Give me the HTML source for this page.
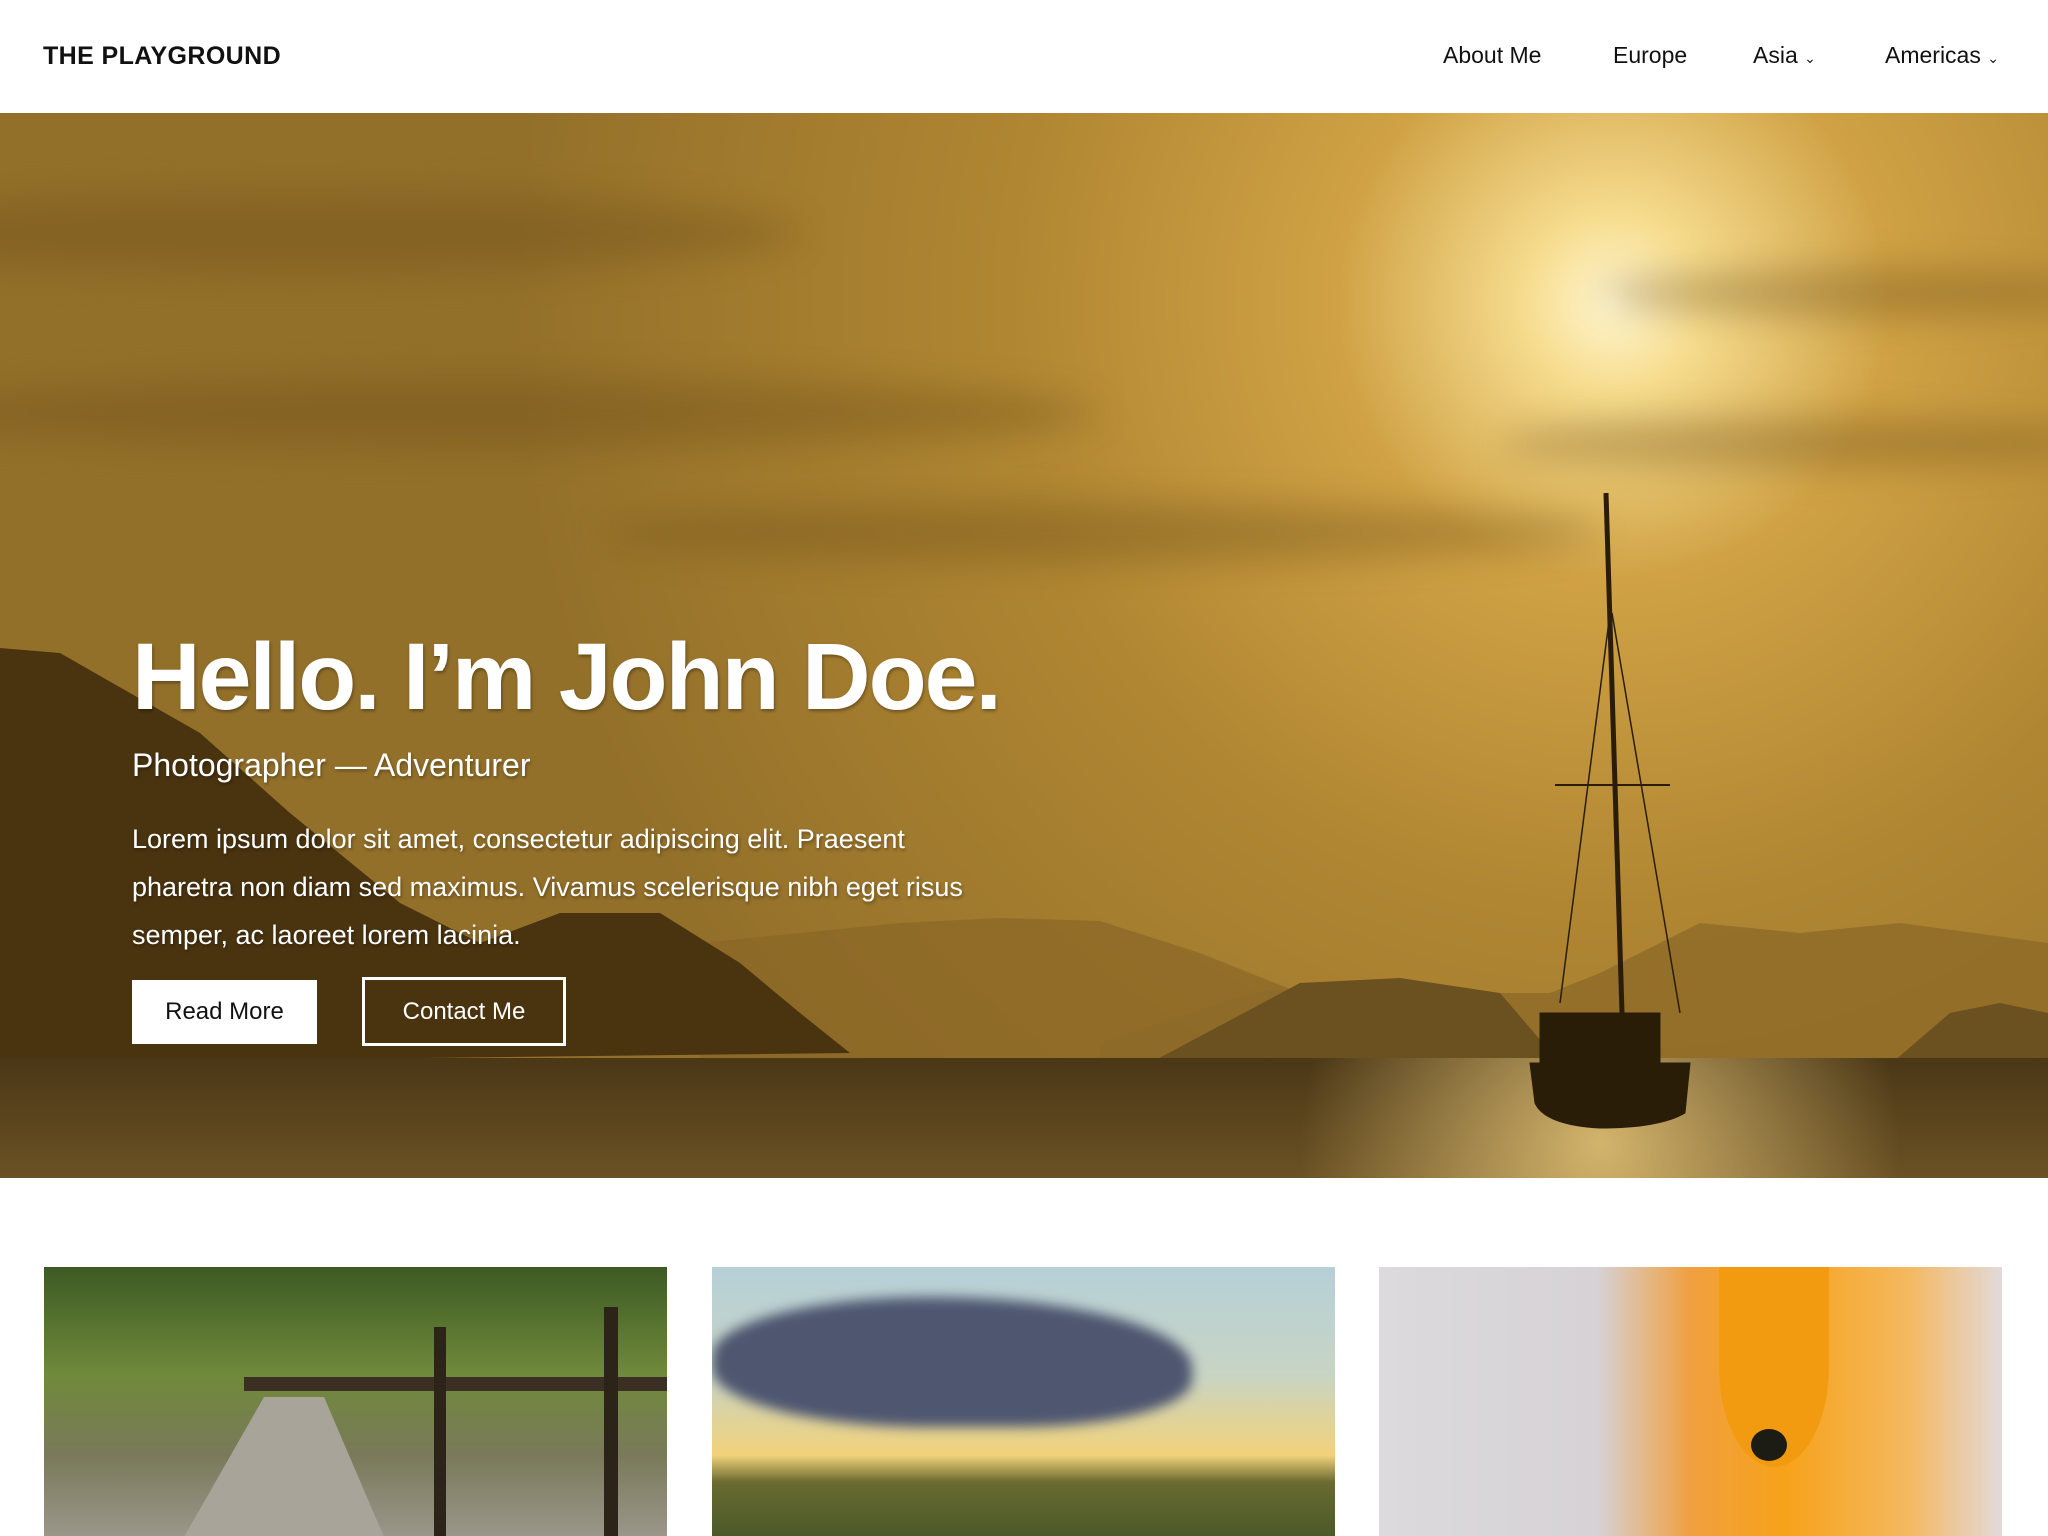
<!DOCTYPE html>
<html><head><meta charset="utf-8"><style>
*{margin:0;padding:0;box-sizing:border-box}
body{width:2048px;height:1536px;overflow:hidden;background:#fff;font-family:"Liberation Sans",sans-serif;position:relative}
.hdr{position:absolute;left:0;top:0;width:2048px;height:113px;background:#fff}
.logo{position:absolute;left:43px;top:42px;font-size:25px;font-weight:bold;letter-spacing:0.4px;color:#111}
.nav{position:absolute;top:42px;font-size:23px;color:#111}
.hero{position:absolute;left:0;top:113px;width:2048px;height:1065px;overflow:hidden}
.t{position:absolute;color:#fff;text-shadow:1px 2px 3px rgba(0,0,0,.35)}
.btn{position:absolute;font-size:24px;display:flex;align-items:center;justify-content:center}
.card{position:absolute;top:1267px;height:269px;width:623px;overflow:hidden}
</style></head><body>
<div class="hdr">
<div class="logo">THE PLAYGROUND</div>
<div class="nav" style="left:1443px">About Me</div>
<div class="nav" style="left:1613px">Europe</div>
<div class="nav" style="left:1753px">Asia <span style="font-size:14px">&#8964;</span></div>
<div class="nav" style="left:1885px">Americas <span style="font-size:14px">&#8964;</span></div>
</div>
<div class="hero">
<svg width="2048" height="1065" viewBox="0 0 2048 1065" style="position:absolute;left:0;top:0">
<defs>
<radialGradient id="sun" cx="1613" cy="190" r="1100" gradientUnits="userSpaceOnUse">
<stop offset="0" stop-color="#fff6d0"/><stop offset="0.08" stop-color="#f6dc8e"/><stop offset="0.25" stop-color="#d0a245"/><stop offset="0.55" stop-color="#b08632"/><stop offset="1" stop-color="#93702a"/></radialGradient>
<linearGradient id="w" x1="0" y1="0" x2="0" y2="1"><stop offset="0" stop-color="#4a3716"/><stop offset="1" stop-color="#6b5224"/></linearGradient>
<radialGradient id="gl" cx="1600" cy="1030" r="300" gradientUnits="userSpaceOnUse"><stop offset="0" stop-color="#f0cf80" stop-opacity=".8"/><stop offset="1" stop-color="#f0cf80" stop-opacity="0"/></radialGradient>
<filter id="bl"><feGaussianBlur stdDeviation="18"/></filter>
</defs>
<rect width="2048" height="1065" fill="url(#sun)"/>
<g filter="url(#bl)" opacity=".35" fill="#6a4c18">
<ellipse cx="300" cy="120" rx="500" ry="40"/><ellipse cx="500" cy="300" rx="600" ry="35"/><ellipse cx="1100" cy="420" rx="500" ry="30"/><ellipse cx="1850" cy="180" rx="250" ry="25"/><ellipse cx="1800" cy="330" rx="300" ry="25"/>
</g>
<path d="M700 830 L800 820 L900 810 L1000 805 L1100 808 L1200 840 L1300 880 L1380 950 L700 960Z" fill="#8a6726" opacity=".7"/>
<path d="M1100 930 L1250 880 L1350 870 L1450 880 L1550 880 L1600 860 L1700 810 L1800 820 L1900 810 L2048 830 L2048 960 L1100 960Z" fill="#8d6a28" opacity=".8"/>
<path d="M1150 950 L1300 870 L1400 865 L1500 880 L1560 950Z" fill="#6b5020"/>
<path d="M1880 960 L1950 900 L2000 890 L2048 900 L2048 960Z" fill="#6b5020"/>
<path d="M0 535 L60 540 L130 580 L200 620 L290 700 L400 790 L480 830 L560 800 L660 800 L740 850 L800 900 L850 940 L0 950Z" fill="#4a3410"/>
<rect y="945" width="2048" height="120" fill="url(#w)"/>
<rect y="945" width="2048" height="120" fill="url(#gl)"/>
<g fill="#2a1d08" stroke="#2a1d08">
<line x1="1606" y1="380" x2="1622" y2="900" stroke-width="5"/>
<line x1="1610" y1="500" x2="1560" y2="890" stroke-width="1.5"/>
<line x1="1612" y1="500" x2="1680" y2="900" stroke-width="1.5"/>
<line x1="1555" y1="672" x2="1670" y2="672" stroke-width="2"/>
<path d="M1530 950 L1690 950 L1685 1000 Q1660 1015 1600 1015 Q1545 1012 1535 990Z"/>
<rect x="1540" y="900" width="120" height="50"/>
</g>
</svg>
<div class="t" style="left:132px;top:510px;font-size:95px;font-weight:bold;letter-spacing:-2px">Hello. I’m John Doe.</div>
<div class="t" style="left:132px;top:634px;font-size:32px">Photographer — Adventurer</div>
<div class="t" style="left:132px;top:702px;font-size:27px;line-height:48px;width:880px">Lorem ipsum dolor sit amet, consectetur adipiscing elit. Praesent pharetra non diam sed maximus. Vivamus scelerisque nibh eget risus semper, ac laoreet lorem lacinia.</div>
<div class="btn" style="left:132px;top:867px;width:185px;height:64px;background:#fff;color:#111">Read More</div>
<div class="btn" style="left:362px;top:864px;width:204px;height:69px;border:3px solid #fff;color:#fff">Contact Me</div>
</div>
<div class="card" style="left:44px;background:linear-gradient(180deg,#3d5a24 0%,#6f8a3a 40%,#7a7a5a 70%,#9a968a 100%)">
<div style="position:absolute;left:140px;top:130px;width:200px;height:140px;background:#a8a49a;clip-path:polygon(40% 0,70% 0,100% 100%,0 100%)"></div>
<div style="position:absolute;left:200px;top:110px;width:423px;height:14px;background:#3a2f22"></div>
<div style="position:absolute;left:390px;top:60px;width:12px;height:209px;background:#2c2418"></div>
<div style="position:absolute;left:560px;top:40px;width:14px;height:229px;background:#2c2418"></div>
</div>
<div class="card" style="left:712px;background:linear-gradient(180deg,#b6d0d8 0%,#c8d4c4 40%,#f2d27a 70%,#6a6a30 80%,#4a5a28 100%)">
<div style="position:absolute;left:0;top:30px;width:480px;height:130px;background:#4e5670;border-radius:50% 60% 40% 50%;filter:blur(6px)"></div>
</div>
<div class="card" style="left:1379px;background:linear-gradient(90deg,#dcdadc 0%,#d6d2d6 35%,#f0a040 50%,#f7a21a 65%,#f4b860 85%,#e2dada 100%)">
<div style="position:absolute;left:340px;top:0;width:110px;height:200px;background:#f39b10;border-radius:0 0 50% 50%"></div>
<div style="position:absolute;left:372px;top:162px;width:36px;height:32px;background:#1c1c14;border-radius:50%"></div>
</div>
</body></html>
